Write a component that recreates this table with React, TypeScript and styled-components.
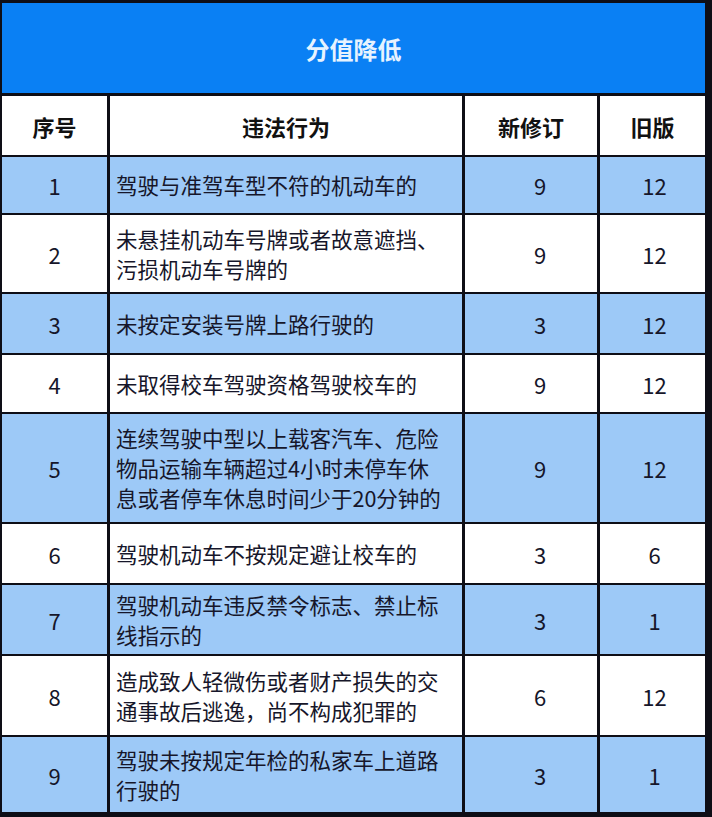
import styled, { createGlobalStyle } from "styled-components";

interface IRow {
  no: string;
  act: string;
  next: string;
  old: string;
  h: number;
}

const rows: IRow[] = [
  { no: "1", act: "驾驶与准驾车型不符的机动车的", next: "9", old: "12", h: 56 },
  { no: "2", act: "未悬挂机动车号牌或者故意遮挡、污损机动车号牌的", next: "9", old: "12", h: 77 },
  { no: "3", act: "未按定安装号牌上路行驶的", next: "3", old: "12", h: 59 },
  { no: "4", act: "未取得校车驾驶资格驾驶校车的", next: "9", old: "12", h: 57 },
  { no: "5", act: "连续驾驶中型以上载客汽车、危险物品运输车辆超过4小时未停车休息或者停车休息时间少于20分钟的", next: "9", old: "12", h: 108 },
  { no: "6", act: "驾驶机动车不按规定避让校车的", next: "3", old: "6", h: 59 },
  { no: "7", act: "驾驶机动车违反禁令标志、禁止标线指示的", next: "3", old: "1", h: 69 },
  { no: "8", act: "造成致人轻微伤或者财产损失的交通事故后逃逸，尚不构成犯罪的", next: "6", old: "12", h: 79 },
  { no: "9", act: "驾驶未按规定年检的私家车上道路行驶的", next: "3", old: "1", h: 75 },
];

export default function App() {
  return (
    <>
      <GlobalStyle />
      <Table>
        <Title>分值降低</Title>
        <HeadCell>序号</HeadCell>
        <HeadCell>违法行为</HeadCell>
        <HeadCell>新修订</HeadCell>
        <HeadCell>旧版</HeadCell>
        {rows.map((r, i) => {
          const blue = i % 2 === 0;
          return [
            <Cell key={r.no + "a"} $blue={blue} $h={r.h}>{r.no}</Cell>,
            <ActCell key={r.no + "b"} $blue={blue} $h={r.h}>{r.act}</ActCell>,
            <Cell key={r.no + "c"} $blue={blue} $h={r.h} $shift={18}>{r.next}</Cell>,
            <Cell key={r.no + "d"} $blue={blue} $h={r.h} $shift={4}>{r.old}</Cell>,
          ];
        })}
      </Table>
    </>
  );
}

const GlobalStyle = createGlobalStyle`
  html, body {
    margin: 0;
    padding: 0;
    background: #0e0e16;
  }
  body {
    font-family: "Noto Sans CJK SC", "Noto Sans", sans-serif;
  }
`;

const Table = styled.div`
  width: 705px;
  box-sizing: border-box;
  padding: 3px 0 5px 2px;
  display: grid;
  grid-template-columns: 105px 352px 132px 105px;
  column-gap: 3px;
  row-gap: 2px;
  background: #0e0e16;
`;

const Title = styled.div`
  grid-column: 1 / -1;
  height: 90px;
  margin-bottom: 1px;
  background: #0a80f4;
  color: #e6f3ff;
  font-size: 24px;
  font-weight: 700;
  display: flex;
  align-items: center;
  justify-content: center;
`;

const HeadCell = styled.div`
  height: 59px;
  background: #ffffff;
  color: #111;
  font-size: 22px;
  font-weight: 700;
  display: flex;
  align-items: center;
  justify-content: center;
`;

const Cell = styled.div<{ $blue: boolean; $h: number; $shift?: number }>`
  height: ${(p) => p.$h}px;
  box-sizing: border-box;
  padding-left: ${(p) => p.$shift ?? 0}px;
  background: ${(p) => (p.$blue ? "#9dc9f7" : "#ffffff")};
  color: #16162a;
  font-size: 22px;
  display: flex;
  align-items: center;
  justify-content: center;
`;

const ActCell = styled(Cell)`
  justify-content: flex-start;
  padding: 0 18px 0 6px;
  font-size: 21.5px;
  line-height: 30px;
`;
